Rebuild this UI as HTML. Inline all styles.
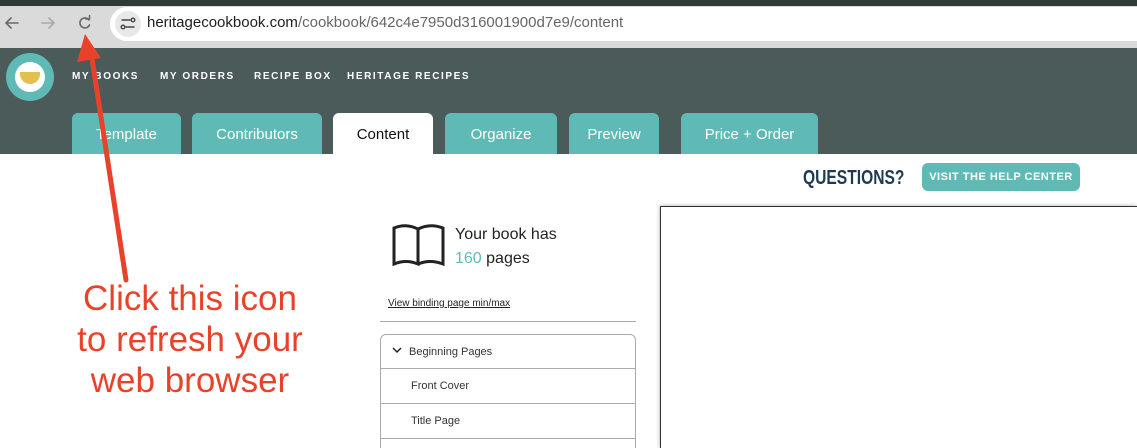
<!DOCTYPE html>
<html><head><meta charset="utf-8"><style>
*{margin:0;padding:0;box-sizing:border-box}
html,body{width:1137px;height:448px;overflow:hidden}
body{background:#fff;font-family:"Liberation Sans",sans-serif;position:relative}
.abs{position:absolute}
.tab{position:absolute;top:113px;height:41px;background:#5fbab6;border-radius:6px 6px 0 0;color:#fff;font-size:15px;text-align:center;line-height:43px}
.nav{position:absolute;top:71px;color:#fff;font-weight:bold;font-size:10px;letter-spacing:1.6px;white-space:nowrap}
.row{position:absolute;left:380px;width:256px;height:35px;border:1px solid #aaa;border-top:none;font-size:11px;color:#333;padding-left:30px;line-height:35px}
</style></head><body>
<div class="abs" style="left:0;top:0;width:1137px;height:48px;background:#dadada"></div>
<div class="abs" style="left:0;top:0;width:1137px;height:6px;background:#2f3b36"></div>
<div class="abs" style="left:110px;top:7px;width:1027px;height:34px;background:#fff;border-radius:17px 0 0 17px"></div>
<div class="abs" style="left:115px;top:11px;width:26px;height:26px;background:#e8e8e8;border-radius:13px"></div>
<svg class="abs" style="left:0;top:10px" width="145" height="28" viewBox="0 0 145 28">
<g stroke="#6a6a6a" stroke-width="1.6" fill="none" stroke-linecap="round">
<path d="M18 13H6M11 8L6 13L11 18"/>
</g>
<g stroke="#a9a9a9" stroke-width="1.6" fill="none" stroke-linecap="round"><path d="M42 13H54M49 8L54 13L49 18"/></g>
<g stroke="#6a6a6a" stroke-width="1.6" fill="none" stroke-linecap="round"><path d="M89 10A5 5 0 1 0 89.5 15"/><path d="M86 9H89.5V5.5"/></g>
<g stroke="#444" stroke-width="1.4" fill="none" stroke-linecap="round"><path d="M122 10H130M126 17H134"/><circle cx="133" cy="10" r="1.8"/><circle cx="123" cy="17" r="1.8"/></g>
</svg>
<div class="abs" style="left:147px;top:14px;font-size:15px;color:#202020">heritagecookbook.com<span style="color:#666">/cookbook/642c4e7950d316001900d7e9/content</span></div>
<div class="abs" style="left:0;top:48px;width:1137px;height:106px;background:#4b5b5a"></div>
<div class="abs" style="left:6px;top:53px;width:48px;height:48px;border-radius:50%;background:#5fbab6"></div>
<div class="abs" style="left:15px;top:62px;width:30px;height:30px;border-radius:50%;background:#fff"></div>
<div class="abs" style="left:20px;top:72px;width:20px;height:12px;border-radius:0 0 12px 12px;background:#e2c04e"></div>
<div class="nav" style="left:72px">MY BOOKS</div>
<div class="nav" style="left:160px">MY ORDERS</div>
<div class="nav" style="left:254px">RECIPE BOX</div>
<div class="nav" style="left:347px">HERITAGE RECIPES</div>
<div class="tab" style="left:72px;width:109px">Template</div>
<div class="tab" style="left:192px;width:130px">Contributors</div>
<div class="tab" style="left:333px;width:100px;background:#fff;color:#111">Content</div>
<div class="tab" style="left:445px;width:112px">Organize</div>
<div class="tab" style="left:569px;width:90px">Preview</div>
<div class="tab" style="left:681px;width:137px">Price + Order</div>
<div class="abs" style="left:803px;top:167px;font-size:20px;font-weight:bold;color:#1e3a52;transform:scaleX(.78);transform-origin:left">QUESTIONS?</div>
<div class="abs" style="left:922px;top:163px;width:158px;height:28px;background:#5fbab6;border-radius:6px;color:#fff;font-size:11px;font-weight:bold;text-align:center;line-height:29px;letter-spacing:.5px">VISIT THE HELP CENTER</div>
<div class="abs" style="left:660px;top:206px;width:477px;height:242px;border:1px solid #333;border-right:none;border-bottom:none;box-shadow:0 0 4px #aaa"></div>
<svg class="abs" style="left:392px;top:224px" width="54" height="44" viewBox="0 0 54 44"><path d="M2 4Q14 -1 26 5V40Q14 35 2 40Z M26 5Q38 -1 51 4V40Q38 35 26 40" fill="none" stroke="#222" stroke-width="3"/></svg>
<div class="abs" style="left:455px;top:223px;font-size:16px;color:#222;line-height:24px">Your book has<br><span style="color:#5fbab6">160</span> pages</div>
<div class="abs" style="left:388px;top:298px;font-size:10px;color:#222;text-decoration:underline">View binding page min/max</div>
<div class="abs" style="left:380px;top:321px;width:256px;height:1px;background:#aaa"></div>
<div class="row" style="top:334px;border-top:1px solid #aaa;border-radius:6px 6px 0 0;padding-left:28px">Beginning Pages</div>
<svg class="abs" style="left:392px;top:347px" width="10" height="7"><path d="M1 1L5 5L9 1" stroke="#222" stroke-width="1.5" fill="none"/></svg>
<div class="row" style="top:369px">Front Cover</div>
<div class="row" style="top:404px">Title Page</div>
<div class="row" style="top:439px;height:9px;border-bottom:none">&nbsp;</div>
<svg class="abs" style="left:0;top:0" width="200" height="300"><path d="M126 280L91 52" stroke="#e8432a" stroke-width="5" stroke-linecap="round"/><path d="M85 34L77 62L101 58Z" fill="#e8432a"/></svg>
<div class="abs" style="left:30px;top:278px;width:320px;text-align:center;font-size:35px;line-height:41px;color:#e8432a">Click this icon<br>to refresh your<br>web browser</div>
</body></html>
